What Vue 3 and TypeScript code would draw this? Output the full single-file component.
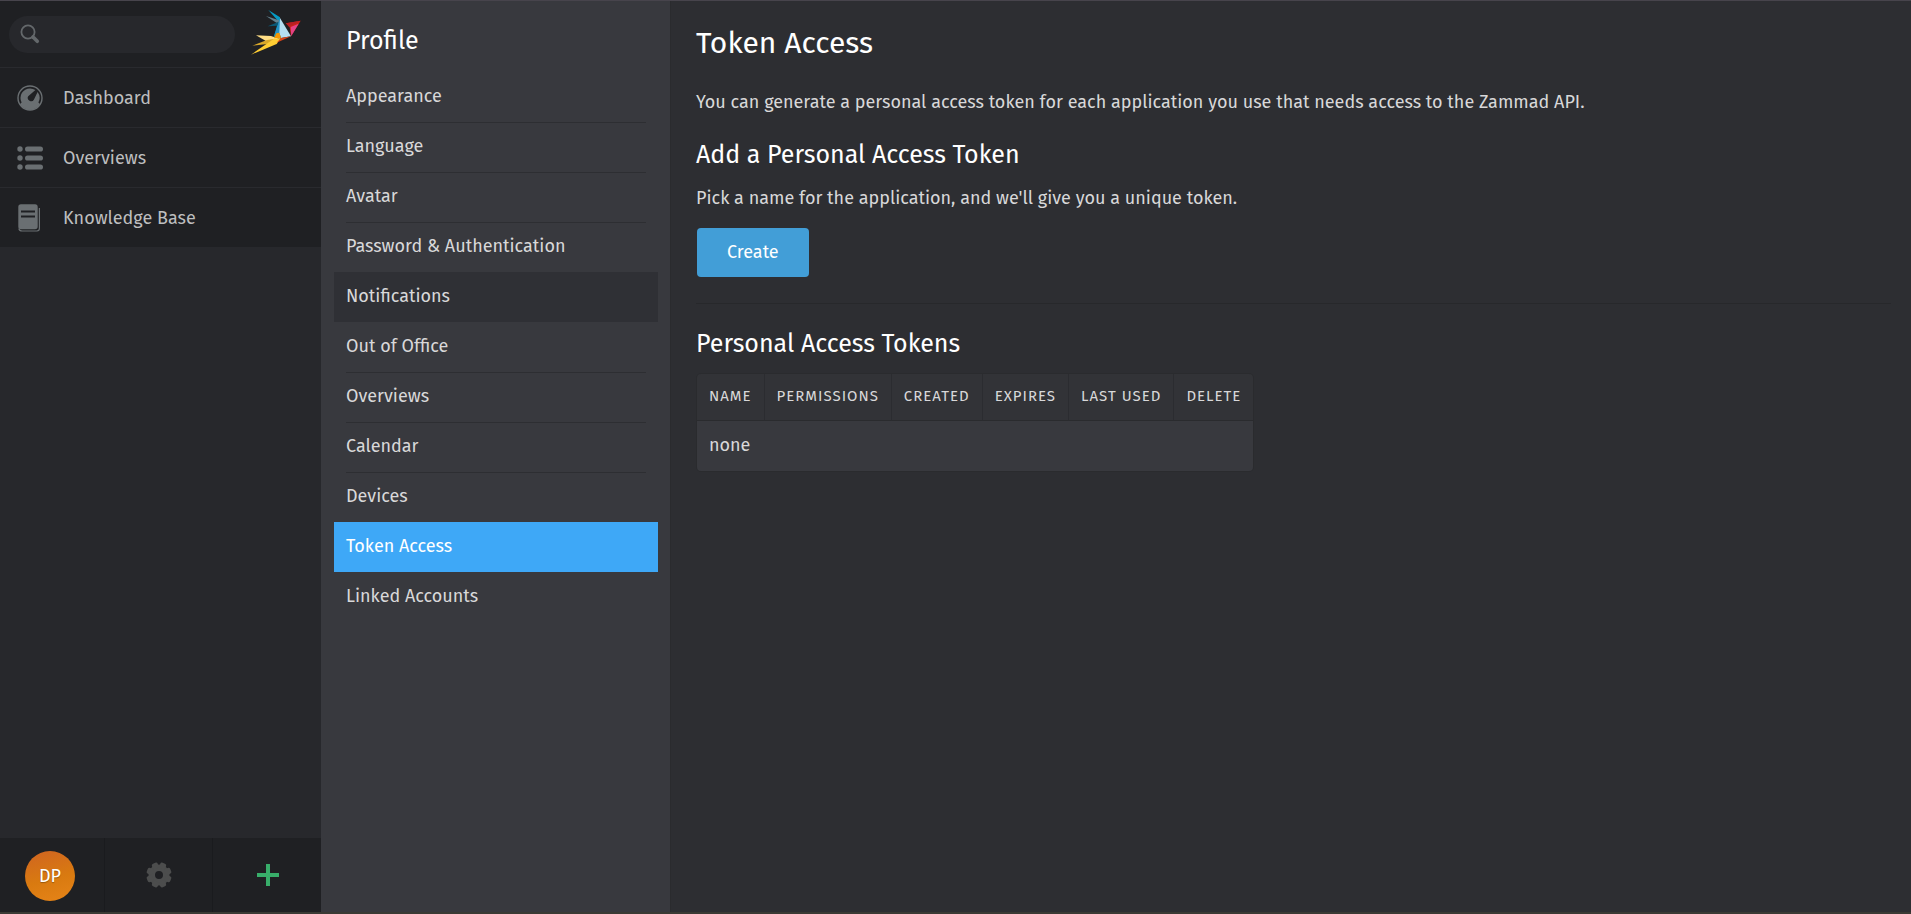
<script setup lang="ts">
import { ref } from 'vue'

interface ProfileLink {
  label: string
  slug: string
  separated: boolean
}

const query = ref('')
const active = ref('token_access')
const highlighted = ref('notifications')

const links: ProfileLink[] = [
  { label: 'Appearance', slug: 'appearance', separated: false },
  { label: 'Language', slug: 'language', separated: true },
  { label: 'Avatar', slug: 'avatar', separated: true },
  { label: 'Password & Authentication', slug: 'password', separated: true },
  { label: 'Notifications', slug: 'notifications', separated: false },
  { label: 'Out of Office', slug: 'out_of_office', separated: false },
  { label: 'Overviews', slug: 'overviews', separated: true },
  { label: 'Calendar', slug: 'calendar', separated: true },
  { label: 'Devices', slug: 'devices', separated: true },
  { label: 'Token Access', slug: 'token_access', separated: false },
  { label: 'Linked Accounts', slug: 'linked', separated: false },
]

const columns: string[] = ['Name', 'Permissions', 'Created', 'Expires', 'Last Used', 'Delete']
</script>

<template>
  <div class="app">
    <aside class="sidebar">
      <header class="topbar">
        <label class="search">
          <svg class="search-icon" viewBox="0 0 20 20" aria-hidden="true">
            <circle cx="8" cy="8" r="6.6" fill="none" stroke="currentColor" stroke-width="1.8" />
            <path d="M13 13l4.3 4.3" stroke="currentColor" stroke-width="3.6" stroke-linecap="round" />
          </svg>
          <input v-model="query" class="search-input" type="text" aria-label="Search" />
        </label>
        <a class="logo" href="#dashboard" aria-label="Zammad">
          <svg viewBox="0 0 150 135" aria-hidden="true">
            <path d="M52 0L87 22L85 70L68 82L82 34Z" fill="#069bc5" />
            <path d="M45 18L84 31L83 43Z" fill="#62818f" />
            <path d="M50 49L83 35L80 47Z" fill="#0b5875" />
            <path d="M82 40L87 24L88 84L76 70L68 82Z" fill="#2591c4" />
            <path d="M87 24L120 79L90 84L85 68Z" fill="#b5def1" />
            <path d="M104 40L149 32L120 79L116 52Z" fill="#ca2317" />
            <path d="M106 40L149 32L114 50Z" fill="#b81f24" />
            <path d="M119 51L143 41L121 78Z" fill="#e54286" />
            <path d="M15 76L60 78L84 86L46 94Z" fill="#ffde85" />
            <path d="M4 107L48 90L73 86L50 102Z" fill="#d9a82a" />
            <path d="M0 134L69 86L90 84L77 102Z" fill="#ffce33" />
            <path d="M76 70L85 68L90 84L69 84Z" fill="#f39804" />
            <path d="M77 98L90 84L120 79Z" fill="#d8441b" />
          </svg>
        </a>
      </header>

      <nav class="main-nav" aria-label="Main">
        <a class="main-link" href="#dashboard">
          <svg class="main-icon" viewBox="0 0 26 28" aria-hidden="true">
            <circle cx="13" cy="14" r="12" fill="none" stroke="currentColor" stroke-width="1.4" />
            <path
              fill="currentColor"
              fill-rule="evenodd"
              d="M13 4.4A9.6 9.6 0 0 0 4.6 18.5L2.8 20.2A12 12 0 0 0 23.2 20.2L21.4 18.5A9.6 9.6 0 0 0 20.6 8.1L17 15.4A3.3 3.3 0 1 1 11.2 12.2L18.4 6A9.6 9.6 0 0 0 13 4.4Z"
            />
          </svg>
          <span>Dashboard</span>
        </a>
        <a class="main-link" href="#overviews">
          <svg class="main-icon" viewBox="0 0 26 28" aria-hidden="true" fill="currentColor">
            <circle cx="3" cy="5" r="2.7" />
            <circle cx="3" cy="14" r="2.7" />
            <circle cx="3" cy="23" r="2.7" />
            <rect x="8" y="2.4" width="18" height="5.2" rx="2.6" />
            <rect x="8" y="11.4" width="18" height="5.2" rx="2.6" />
            <rect x="8" y="20.4" width="18" height="5.2" rx="2.6" />
          </svg>
          <span>Overviews</span>
        </a>
        <a class="main-link" href="#knowledge_base">
          <svg class="main-icon" viewBox="0 0 26 28" aria-hidden="true">
            <path d="M22.4 4V24.6Q22.4 27 20 27H5Q2.4 27 1.8 24.5" fill="none" stroke="currentColor" stroke-width="1.2" />
            <path
              fill="currentColor"
              fill-rule="evenodd"
              d="M4 .3H18Q20.700 .3 20.700 3V22.500Q20.700 25.200 18 25.200H4Q1.300 25.200 1.300 22.500V3Q1.300 .3 4 .3ZM4 6.500V8.600H18V6.500ZM4 11.500V13.600H18V11.500Z"
            />
          </svg>
          <span>Knowledge Base</span>
        </a>
      </nav>

      <footer class="toolbar">
        <button class="tool user" type="button" aria-label="User menu">
          <span class="avatar">DP</span>
        </button>
        <button class="tool" type="button" aria-label="Settings">
          <svg class="gear" viewBox="0 0 26 26" aria-hidden="true">
            <g fill="currentColor">
              <path
                fill-rule="evenodd"
                d="M13 2.500a10.500 10.500 0 1 0 0 21a10.500 10.500 0 1 0 0-21ZM13 9a4 4 0 1 1 0 8a4 4 0 1 1 0-8Z"
              />
              <rect
                v-for="n in 8"
                :key="n"
                x="9.800"
                y="0.300"
                width="6.400"
                height="6"
                rx="2"
                :transform="`rotate(${n * 45 - 22.5} 13 13)`"
              />
            </g>
          </svg>
        </button>
        <button class="tool" type="button" aria-label="New">
          <svg class="plus" viewBox="0 0 22 22" aria-hidden="true">
            <path d="M11 0V22M0 11H22" stroke="currentColor" stroke-width="4" />
          </svg>
        </button>
      </footer>
    </aside>

    <section class="profile">
      <h2 class="profile-title">Profile</h2>
      <nav class="profile-nav" aria-label="Profile">
        <a
          v-for="link in links"
          :key="link.slug"
          class="profile-link"
          :class="{
            separated: link.separated,
            active: link.slug === active,
            highlighted: link.slug === highlighted,
          }"
          :href="`#profile/${link.slug}`"
          @click.prevent="active = link.slug"
        >
          <span class="profile-label">{{ link.label }}</span>
        </a>
      </nav>
    </section>

    <main class="content">
      <h1 class="page-title">Token Access</h1>
      <p class="text intro">
        You can generate a personal access token for each application you use that needs access to the Zammad API.
      </p>
      <h2 class="section-title">Add a Personal Access Token</h2>
      <p class="text">Pick a name for the application, and we'll give you a unique token.</p>
      <button class="create" type="button">Create</button>
      <hr class="rule" />
      <h2 class="section-title">Personal Access Tokens</h2>
      <table class="tokens">
        <thead>
          <tr>
            <th v-for="column in columns" :key="column" scope="col">{{ column }}</th>
          </tr>
        </thead>
        <tbody>
          <tr>
            <td :colspan="columns.length">none</td>
          </tr>
        </tbody>
      </table>
    </main>
  </div>
</template>

<style>
body {
  background: #2d2e32;
}
</style>

<style scoped>
.app {
  display: flex;
  box-sizing: border-box;
  min-height: 100vh;
  border-top: 1px solid #47444c;
  border-bottom: 2px solid #3b3a34;
  background: #2d2e32;
  color: #d8d8d9;
  font-family: 'Fira Sans', Roboto, 'Noto Sans', sans-serif;
  font-size: 18px;
  line-height: 24px;
}

.app *,
.app *::before {
  box-sizing: border-box;
}

h1,
h2,
p {
  margin: 0;
  font-weight: 400;
}

a {
  color: inherit;
  text-decoration: none;
}

button,
input {
  border: 0;
  color: inherit;
  font: inherit;
}

/* Sidebar */
.sidebar {
  display: flex;
  flex: none;
  flex-direction: column;
  width: 321px;
  background: #27282c;
}

.topbar {
  display: flex;
  align-items: center;
  gap: 16px;
  height: 66px;
  padding: 0 20px 0 9px;
  background: #1f2023;
}

.search {
  display: flex;
  flex: 1;
  align-items: center;
  gap: 8px;
  min-width: 0;
  height: 37px;
  padding: 0 12px 0 11px;
  border-radius: 19px;
  background: #27282c;
  color: #64686b;
}

.search-icon {
  flex: none;
  width: 20px;
  height: 20px;
}

.search-input {
  flex: 1;
  min-width: 0;
  padding: 0;
  outline: 0;
  background: transparent;
  color: #d8d8d9;
}

.logo {
  flex: none;
  padding-bottom: 4px;
}

.logo svg {
  display: block;
  width: 50px;
  height: 45px;
}

.main-link {
  display: flex;
  align-items: center;
  gap: 20px;
  height: 60px;
  padding: 0 17px;
  border-top: 1px solid #292a2e;
  background: #1f2023;
  color: #bdbebf;
}

.main-icon {
  flex: none;
  width: 26px;
  height: 28px;
  color: #6a6f72;
}

.toolbar {
  display: grid;
  grid-template-columns: 105px 108px 1fr;
  height: 74px;
  margin-top: auto;
  background: #1f2023;
}

.tool {
  display: grid;
  place-items: center;
  padding: 0;
  border-right: 1px solid #1a1b1e;
  background: transparent;
}

.user {
  padding: 2px 4px 0 0;
}

.tool:last-child {
  padding-left: 2px;
  border-right: 0;
}

.avatar {
  width: 50px;
  border-radius: 50%;
  background: linear-gradient(165deg, #d06620 5%, #d97a10 55%, #e68418);
  color: #fff;
  line-height: 50px;
  text-shadow: 0 1px 1px rgba(0, 0, 0, 0.3);
}

.gear {
  width: 26px;
  height: 26px;
  color: #4c4d4d;
}

.plus {
  width: 22px;
  height: 22px;
  color: #38ae6a;
}

/* Profile navigation */
.profile {
  flex: none;
  width: 350px;
  padding: 24px 12px 0 13px;
  border-right: 1px solid #2a2b2e;
  background: #38393e;
}

.profile-title {
  padding: 0 12px;
  color: #fff;
  font-size: 25px;
  line-height: 32px;
}

.profile-nav {
  display: flex;
  flex-direction: column;
  margin-top: 15px;
}

.profile-link {
  height: 50px;
  padding: 0 12px;
}

.profile-label {
  display: block;
  height: 50px;
  border-top: 1px solid transparent;
  line-height: 47px;
}

.separated .profile-label {
  border-top-color: #2d2e32;
}

.highlighted {
  background: #2f3035;
}

.active {
  background: #3ea8f7;
  color: #fff;
}

/* Content */
.content {
  flex: 1;
  min-width: 0;
  padding: 22px 20px 40px 25px;
}

.page-title {
  color: #fff;
  font-size: 30px;
  line-height: 40px;
}

.intro {
  margin: 27px 0 25px;
}

.section-title {
  margin-bottom: 15px;
  color: #fff;
  font-size: 25px;
  line-height: 32px;
}

.create {
  display: block;
  height: 49px;
  margin: 18px 1px 0;
  padding: 0 30px 2px;
  border-radius: 4px;
  background: #429ed7;
  color: #fff;
}

.rule {
  height: 1px;
  margin: 26px 0 24px;
  border: 0;
  background: #27282b;
}

.tokens {
  margin-top: -2px;
  border: 1px solid #2a2b2e;
  border-collapse: separate;
  border-spacing: 0;
  border-radius: 5px;
  overflow: hidden;
}

.tokens th {
  height: 47px;
  padding: 0 12px 2px;
  border-right: 1px solid #2b2c30;
  border-bottom: 1px solid #2a2b2e;
  background: #323337;
  font-size: 15px;
  font-weight: 400;
  letter-spacing: 1px;
  text-align: left;
  text-transform: uppercase;
}

.tokens th:last-child {
  border-right: 0;
}

.tokens td {
  height: 50px;
  padding: 0 12px 2px;
  background: #38393e;
}
</style>
